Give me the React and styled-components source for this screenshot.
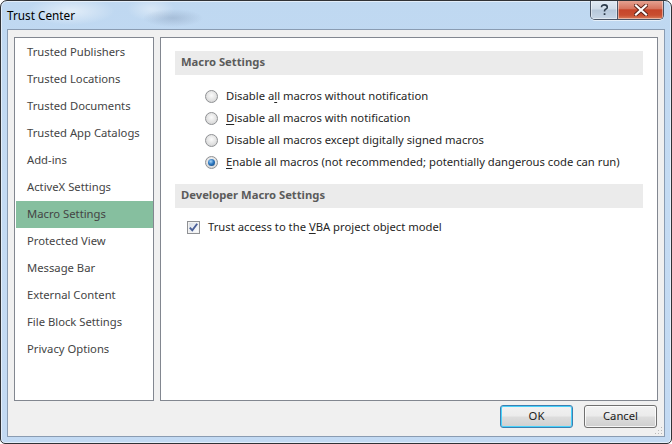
import React, { useState } from "react";
import styled, { createGlobalStyle } from "styled-components";

const GlobalStyle = createGlobalStyle`
  html, body {
    margin: 0;
    padding: 0;
    background: #ffffff;
  }
  body {
    font-family: "Noto Sans", "Open Sans", "DejaVu Sans", sans-serif;
    font-size: 11.25px;
    color: #333333;
  }
  * {
    box-sizing: border-box;
  }
`;

const navItems = [
  "Trusted Publishers",
  "Trusted Locations",
  "Trusted Documents",
  "Trusted App Catalogs",
  "Add-ins",
  "ActiveX Settings",
  "Macro Settings",
  "Protected View",
  "Message Bar",
  "External Content",
  "File Block Settings",
  "Privacy Options",
];

const macroOptions = [
  { id: "none", label: ["Disable a", "l", "l macros without notification"] },
  { id: "notify", label: ["", "D", "isable all macros with notification"] },
  {
    id: "signed",
    label: ["Disable all macros except di", "g", "itally signed macros"],
  },
  {
    id: "all",
    label: [
      "",
      "E",
      "nable all macros (not recommended; potentially dangerous code can run)",
    ],
  },
];

export default function App() {
  const [active, setActive] = useState("Macro Settings");
  const [macro, setMacro] = useState("all");
  const [trustVba, setTrustVba] = useState(true);

  return (
    <>
      <GlobalStyle />
      <Window>
        <TitleBar>
          <Title>Trust Center</Title>
          <CaptionButtons>
            <HelpButton aria-label="Help">
              <svg width="9" height="12" viewBox="0 0 9 12">
                <path
                  d="M1.5 3.2 C1.5 1.6 2.8 0.9 4.4 0.9 C6.1 0.9 7.3 1.8 7.3 3.2 C7.3 4.6 5.9 5 5 5.8 C4.6 6.2 4.5 6.6 4.5 7.6"
                  fill="none"
                  stroke="#2c3a4a"
                  strokeWidth="1.6"
                />
                <rect x="3.7" y="9.2" width="1.7" height="1.8" fill="#2c3a4a" />
              </svg>
            </HelpButton>
            <CloseButton aria-label="Close">
              <svg width="14" height="12" viewBox="0 0 14 12">
                <path
                  d="M2 1.5 L12 10.5 M12 1.5 L2 10.5"
                  stroke="#5a2218"
                  strokeWidth="4"
                  strokeLinecap="square"
                />
                <path
                  d="M2 1.5 L12 10.5 M12 1.5 L2 10.5"
                  stroke="#ffffff"
                  strokeWidth="2.2"
                  strokeLinecap="square"
                />
              </svg>
            </CloseButton>
          </CaptionButtons>
        </TitleBar>

        <Client>
          <Panels>
            <NavPanel>
              {navItems.map((item) => (
                <NavItem
                  key={item}
                  $selected={item === active}
                  onClick={() => setActive(item)}
                >
                  {item}
                </NavItem>
              ))}
            </NavPanel>

            <ContentPanel>
              <SectionHeader>Macro Settings</SectionHeader>
              <OptionList>
                {macroOptions.map((opt) => (
                  <OptionRow key={opt.id} onClick={() => setMacro(opt.id)}>
                    <Radio $checked={macro === opt.id} />
                    <span>
                      {opt.label[0]}
                      <u>{opt.label[1]}</u>
                      {opt.label[2]}
                    </span>
                  </OptionRow>
                ))}
              </OptionList>

              <SectionHeader $gap={11}>Developer Macro Settings</SectionHeader>
              <CheckRow onClick={() => setTrustVba(!trustVba)}>
                <Checkbox>
                  {trustVba && (
                    <svg width="11" height="11" viewBox="0 0 11 11">
                      <path
                        d="M1.8 5.6 L4.3 8.3 L9.2 1.8"
                        fill="none"
                        stroke="#4a5f98"
                        strokeWidth="1.9"
                      />
                    </svg>
                  )}
                </Checkbox>
                <span>
                  Trust access to the <u>V</u>BA project object model
                </span>
              </CheckRow>
            </ContentPanel>
          </Panels>

          <Footer>
            <DialogButton $default>OK</DialogButton>
            <DialogButton>Cancel</DialogButton>
          </Footer>

          <Grip width="8" height="8" viewBox="0 0 8 8">
            <rect x="6" y="0" width="1" height="1" fill="#b8b8b8" />
            <rect x="3" y="3" width="1" height="1" fill="#b8b8b8" />
            <rect x="6" y="3" width="1" height="1" fill="#b8b8b8" />
            <rect x="0" y="6" width="1" height="1" fill="#b8b8b8" />
            <rect x="3" y="6" width="1" height="1" fill="#b8b8b8" />
            <rect x="6" y="6" width="1" height="1" fill="#b8b8b8" />
          </Grip>
        </Client>
      </Window>
    </>
  );
}

const Window = styled.div`
  width: 672px;
  height: 444px;
  display: flex;
  flex-direction: column;
  padding: 0 6px 6px 6px;
  border: 1px solid #303236;
  border-radius: 7px 7px 5px 5px;
  box-shadow: inset 0 0 0 1px rgba(255, 255, 255, 0.55);
  background:
    radial-gradient(ellipse 44px 14px at 70px 10px, rgba(255, 255, 255, 0.55), transparent),
    radial-gradient(ellipse 30px 9px at 172px 17px, rgba(110, 130, 160, 0.3), transparent),
    radial-gradient(ellipse 24px 12px at 150px 8px, rgba(255, 255, 255, 0.4), transparent),
    linear-gradient(to bottom, #bfd8f1 0%, #c4dbf3 40%, #c3daf3 100%);
  overflow: hidden;
`;

const TitleBar = styled.div`
  height: 28px;
  display: flex;
  align-items: flex-start;
  justify-content: space-between;
`;

const Title = styled.div`
  margin-top: 6px;
  font-size: 11.75px;
  color: #000000;
`;

const CaptionButtons = styled.div`
  display: flex;
  margin-top: -1px;
  margin-right: 1px;
  height: 20px;
  border: 1px solid #4a5566;
  border-top: none;
  border-radius: 0 0 5px 5px;
  overflow: hidden;
  box-shadow: 0 1px 0 rgba(255, 255, 255, 0.6);
`;

const CaptionButton = styled.button`
  height: 100%;
  border: none;
  padding: 0;
  margin: 0;
  display: flex;
  align-items: center;
  justify-content: center;
  box-shadow: inset 0 0 0 1px rgba(255, 255, 255, 0.45);
`;

const HelpButton = styled(CaptionButton)`
  width: 27px;
  border-right: 1px solid #4a5566;
  background: linear-gradient(
    to bottom,
    #e3ebf4 0%,
    #cfdbe8 48%,
    #b6c7da 52%,
    #c7d6e6 100%
  );
`;

const CloseButton = styled(CaptionButton)`
  width: 45px;
  background: linear-gradient(
    to bottom,
    #e7a797 0%,
    #d7755f 45%,
    #c6452a 52%,
    #c94e30 80%,
    #d97e5c 100%
  );
`;

const Client = styled.div`
  position: relative;
  flex: 1;
  display: flex;
  flex-direction: column;
  padding: 7px 6px 8px 6px;
  background: #f0f0f0;
  border: 1px solid #8a9cb2;
`;

const Panels = styled.div`
  height: 364px;
  display: flex;
  gap: 6px;
`;

const NavPanel = styled.div`
  width: 140px;
  background: #ffffff;
  border: 1px solid #828790;
  padding: 1px 0 0 1px;
`;

const NavItem = styled.div`
  height: 27px;
  display: flex;
  align-items: center;
  padding: 0 0 2px 11px;
  color: #444444;
  cursor: default;
  background: ${({ $selected }) => ($selected ? "#86bf9f" : "transparent")};
`;

const ContentPanel = styled.div`
  flex: 1;
  background: #ffffff;
  border: 1px solid #828790;
  padding: 13px 14px 0 14px;
`;

const SectionHeader = styled.div`
  height: 24px;
  margin-top: ${({ $gap }) => ($gap ? `${$gap}px` : "0")};
  display: flex;
  align-items: center;
  padding: 0 0 3px 6px;
  background: #ebebeb;
  color: #5b5b5b;
  font-weight: 700;
`;

const OptionList = styled.div`
  display: flex;
  flex-direction: column;
  margin-top: 10px;
  padding-left: 30px;
`;

const OptionRow = styled.label`
  height: 22px;
  display: flex;
  align-items: center;
  gap: 8px;
  color: #262626;
  span:last-child {
    margin-top: -2px;
  }
  u {
    text-underline-offset: 2px;
  }
`;

const Radio = styled.span`
  position: relative;
  width: 13px;
  height: 13px;
  flex-shrink: 0;
  border-radius: 50%;
  border: 1px solid #8f9194;
  background: radial-gradient(circle at 50% 40%, #fbfbfb 0%, #e2e2e2 55%, #cacaca 100%);
  &::after {
    content: "";
    display: ${({ $checked }) => ($checked ? "block" : "none")};
    position: absolute;
    left: 2px;
    top: 2px;
    width: 7px;
    height: 7px;
    border-radius: 50%;
    background: radial-gradient(circle at 40% 35%, #a9d6f8 0%, #2e78c0 45%, #0f3d70 100%);
  }
`;

const CheckRow = styled.label`
  height: 22px;
  margin-top: 8px;
  display: flex;
  align-items: center;
  gap: 8px;
  padding-left: 12px;
  color: #262626;
  span:last-child {
    margin-top: -2px;
  }
  u {
    text-underline-offset: 2px;
  }
`;

const Checkbox = styled.span`
  width: 13px;
  height: 13px;
  flex-shrink: 0;
  display: flex;
  align-items: center;
  justify-content: center;
  border: 1px solid #8f9194;
  background: linear-gradient(135deg, #d6dce4 0%, #eef1f5 60%, #ffffff 100%);
  box-shadow: inset 0 0 0 1px #f2f2f2;
`;

const Footer = styled.div`
  margin-top: 4px;
  display: flex;
  justify-content: flex-end;
  gap: 11px;
  padding-right: 1px;
`;

const DialogButton = styled.button`
  width: 73px;
  height: 23px;
  padding: 0 0 2px;
  font-family: inherit;
  font-size: 11.25px;
  color: #1a1a1a;
  border-radius: 3px;
  border: 1px solid ${({ $default }) => ($default ? "#3c7fb1" : "#707070")};
  box-shadow: inset 0 0 0 1px
    ${({ $default }) => ($default ? "#48d2fb" : "rgba(255,255,255,0.8)")};
  background: linear-gradient(
    to bottom,
    #f2f2f2 0%,
    #ebebeb 48%,
    #dddddd 52%,
    #cfcfcf 100%
  );
`;

const Grip = styled.svg`
  position: absolute;
  right: 1px;
  bottom: 1px;
`;
